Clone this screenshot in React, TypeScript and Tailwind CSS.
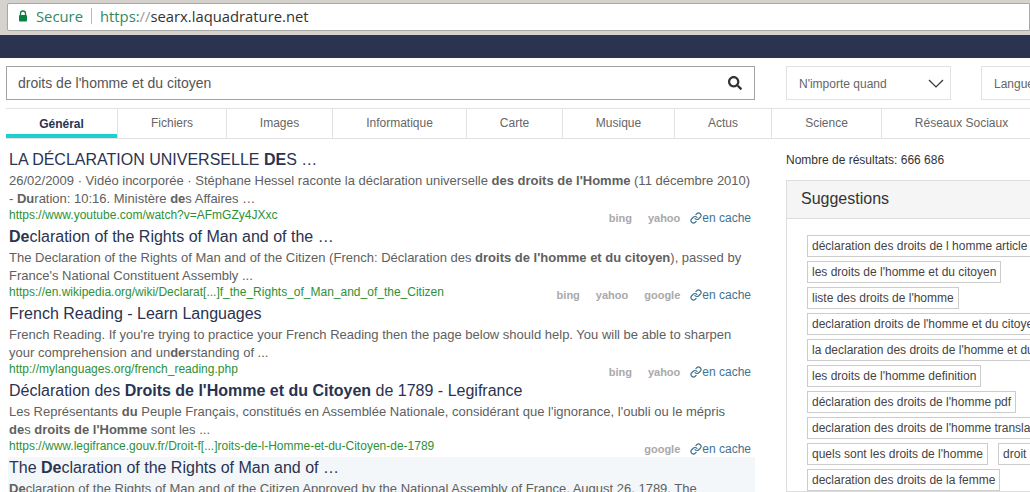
import { Link } from "lucide-react";
import { FaSearch } from "react-icons/fa";

const tabs = [
    { label: "Général", width: "w-[111px]" },
    { label: "Fichiers", width: "w-[109px]" },
    { label: "Images", width: "w-[106px]" },
    { label: "Informatique", width: "w-[134px]" },
    { label: "Carte", width: "w-[96px]" },
    { label: "Musique", width: "w-[112px]" },
    { label: "Actus", width: "w-[97px]" },
    { label: "Science", width: "w-[110px]" },
    { label: "Réseaux Sociaux", width: "w-[160px]" },
];

const suggestions = [
    "déclaration des droits de l homme article",
    "les droits de l'homme et du citoyen",
    "liste des droits de l'homme",
    "declaration droits de l'homme et du citoyen",
    "la declaration des droits de l'homme et du citoyen",
    "les droits de l'homme definition",
    "déclaration des droits de l'homme pdf",
    "declaration des droits de l'homme translation",
    "quels sont les droits de l'homme",
    "droit de l'homme",
    "declaration des droits de la femme",
];

function Engines({ names }: { names: string[] }) {
    return (
        <div className="flex items-center pt-[7px] text-[11px] font-bold text-[#a9a9a9]">
            {names.map((n) => (
                <span key={n} className="ml-[16px]">{n}</span>
            ))}
            <span className="ml-[10px] flex items-center text-[12px] font-normal text-[#3f7391]">
                <Link size={12} strokeWidth={2.4} />
                en cache
            </span>
        </div>
    );
}

function Result({ title, lines, url, engines, shaded }: {
    title: React.ReactNode;
    lines: React.ReactNode[];
    url?: string;
    engines?: string[];
    shaded?: boolean;
}) {
    return (
        <div className={`h-[77px] pl-[1px] pr-[4px] ${shaded ? "bg-[#f4f7f9]" : ""}`}>
            <h3 className="h-[23px] text-[16px] leading-[21px] text-[#2a3350] whitespace-nowrap">{title}</h3>
            <p className="text-[13px] leading-[18px] text-[#606060] whitespace-nowrap">
                {lines.map((l, i) => (
                    <span key={i} className="block">{l}</span>
                ))}
            </p>
            {url && (
                <div className="mt-[-2px] flex h-[17px] items-center justify-between">
                    <span className="text-[12px] text-[#2e9136]">{url}</span>
                    {engines && <Engines names={engines} />}
                </div>
            )}
        </div>
    );
}

export default function App() {
    return (
        <div className="h-[492px] w-[1030px] overflow-hidden bg-white font-['Liberation_Sans',Arial,sans-serif]">
            {/* browser bar */}
            <div className="h-[35px] bg-[#d5d2cd] pl-[7px] pt-[3px]">
                <div className="flex h-[28px] items-center rounded-l-[2px] border border-[#a8a8a8] bg-white pb-[2px] pl-[10px] font-['Open_Sans',sans-serif] text-[14.8px]">
                    <svg width="10" height="12" viewBox="0 0 10 12" className="mr-[8px]">
                        <path d="M2.5 5V3.5a2.5 2.5 0 0 1 5 0V5" fill="none" stroke="#0b8043" strokeWidth="1.3" />
                        <rect x="1" y="5" width="8" height="6.5" rx="1" fill="#0b8043" />
                    </svg>
                    <span className="text-[#2f8a63]">Secure</span>
                    <span className="mx-[8px] h-[16px] w-px bg-[#bdbdbd]" />
                    <span className="text-[#2f8a63]">https:</span>
                    <span className="text-[#9a9a9a]">//</span>
                    <span className="text-[#333]">searx.laquadrature.net</span>
                </div>
            </div>
            <div className="h-[23px] bg-[#2a3350]" />

            {/* search row */}
            <div className="flex pl-[6px] pt-[8px]">
                <div className="flex h-[34px] w-[749px] shrink-0 items-center justify-between border border-[#a3a3a3] pl-[11px] pr-[12px] text-[14px] text-[#555]">
                    droits de l'homme et du citoyen
                    <FaSearch size={14} className="text-[#333]" />
                </div>
                <div className="ml-[31px] flex h-[34px] w-[165px] shrink-0 items-center justify-between border border-[#e2e2e2] pl-[12px] pr-[6px] pt-[1px] text-[12px] text-[#666]">
                    N'importe quand
                    <svg width="16" height="9" viewBox="0 0 16 9" fill="none" stroke="#333" strokeWidth="1.2">
                        <path d="M1 1l7 7 7-7" />
                    </svg>
                </div>
                <div className="ml-[30px] flex h-[34px] w-[120px] shrink-0 items-center whitespace-nowrap border border-[#e2e2e2] pl-[12px] pt-[1px] text-[12px] text-[#666]">
                    Langue
                </div>
            </div>

            {/* categories */}
            <div className="ml-[6px] mt-[8px] flex h-[31px] w-[1035px] border-y border-[#e2e2e2]">
                {tabs.map((t, i) => (
                    <div
                        key={t.label}
                        className={`flex shrink-0 items-center justify-center text-[12px] ${t.width} ${i === 0 ? "border-b-[4px] border-[#1fcfcf] pt-[4px] font-bold text-[#2a3350]" : "border-l border-[#e2e2e2] pb-[2px] text-[#666]"}`}
                    >
                        {t.label}
                    </div>
                ))}
            </div>

            <div className="flex">
                {/* results */}
                <div className="ml-[8px] w-[747px] shrink-0 pt-[10px]">
                    <Result
                        title={<>LA DÉCLARATION UNIVERSELLE <b>DE</b>S …</>}
                        lines={[
                            <>26/02/2009 · Vidéo incorporée · Stéphane Hessel raconte la déclaration universelle <b>des droits de l'Homme</b> (11 décembre 2010)</>,
                            <>- <b>Du</b>ration: 10:16. Ministère <b>de</b>s Affaires …</>,
                        ]}
                        url="https://www.youtube.com/watch?v=AFmGZy4JXxc"
                        engines={["bing", "yahoo"]}
                    />
                    <Result
                        title={<><b>De</b>claration of the Rights of Man and of the …</>}
                        lines={[
                            <>The Declaration of the Rights of Man and of the Citizen (French: Déclaration des <b>droits de l'homme et du citoyen</b>), passed by</>,
                            "France's National Constituent Assembly ...",
                        ]}
                        url="https://en.wikipedia.org/wiki/Declarat[...]f_the_Rights_of_Man_and_of_the_Citizen"
                        engines={["bing", "yahoo", "google"]}
                    />
                    <Result
                        title="French Reading - Learn Languages"
                        lines={[
                            "French Reading. If you're trying to practice your French Reading then the page below should help. You will be able to sharpen",
                            <>your comprehension and un<b>der</b>standing of ...</>,
                        ]}
                        url="http://mylanguages.org/french_reading.php"
                        engines={["bing", "yahoo"]}
                    />
                    <Result
                        title={<>Déclaration des <b>Droits de l'Homme et du Citoyen</b> de 1789 - Legifrance</>}
                        lines={[
                            <>Les Représentants <b>du</b> Peuple Français, constitués en Assemblée Nationale, considérant que l'ignorance, l'oubli ou le mépris</>,
                            <><b>de</b>s <b>droits de l'Homme</b> sont les ...</>,
                        ]}
                        url="https://www.legifrance.gouv.fr/Droit-f[...]roits-de-l-Homme-et-du-Citoyen-de-1789"
                        engines={["google"]}
                    />
                    <Result
                        shaded
                        title={<>The <b>De</b>claration of the Rights of Man and of …</>}
                        lines={[
                            <><b>De</b>claration of the Rights of Man and of the Citizen Approved by the National Assembly of France, August 26, 1789. The</>,
                        ]}
                    />
                </div>

                {/* sidebar */}
                <div className="ml-[31px] w-[360px] shrink-0 pt-[13px]">
                    <p className="text-[12px] leading-[16px] text-[#333]">Nombre de résultats: 666 686</p>
                    <div className="mt-[12px] border border-[#ddd]">
                        <div className="flex h-[38px] items-center border-b border-[#ddd] bg-[#f5f5f5] pb-[2px] pl-[14px] text-[16px] text-[#333]">
                            Suggestions
                        </div>
                        <div className="flex flex-wrap gap-x-[10px] gap-y-[4px] pl-[20px] pr-[20px] pt-[16px]">
                            {suggestions.map((s) => (
                                <span key={s} className="flex h-[22px] items-center whitespace-nowrap border border-[#ccc] px-[4px] text-[12px] text-[#444]">
                                    {s}
                                </span>
                            ))}
                        </div>
                    </div>
                </div>
            </div>
        </div>
    );
}
